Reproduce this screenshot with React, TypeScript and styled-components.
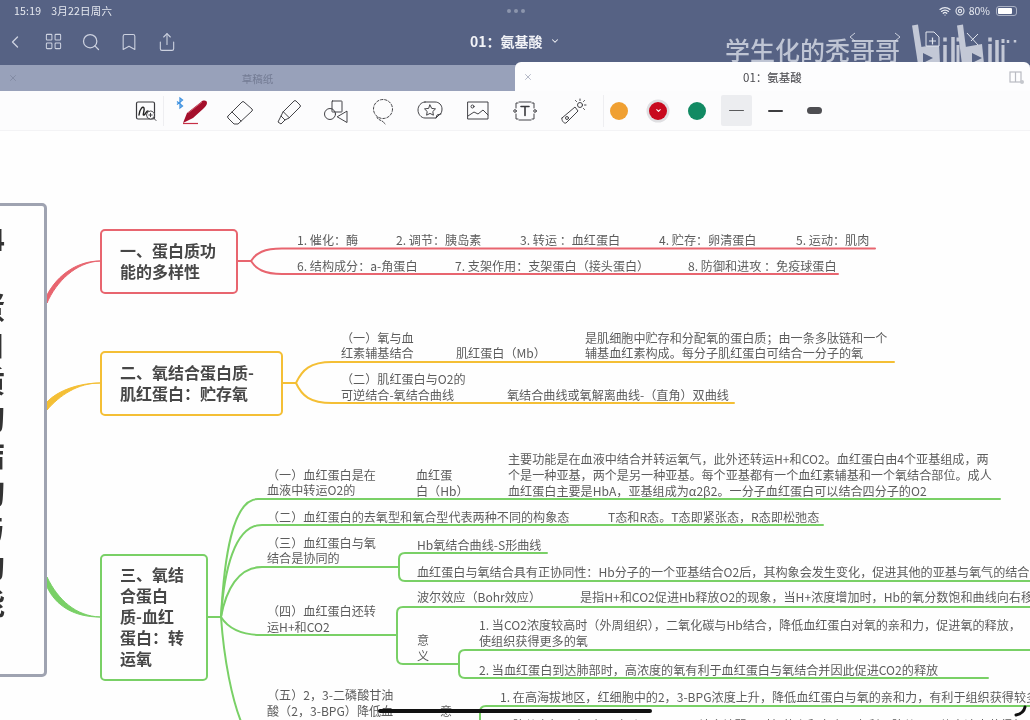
import React from "react";
import styled, { createGlobalStyle } from "styled-components";
import { ChevronLeft, ChevronDown, LayoutGrid, Search, Bookmark, Share, X, Wifi } from "lucide-react";

const Global = createGlobalStyle`
  html, body { margin: 0; padding: 0; width: 1030px; height: 720px; overflow: hidden; background: #fff; }
  * { box-sizing: border-box; }
  #root { width: 1030px; height: 720px; }
`;

const FONT = `"Noto Sans CJK SC", "Noto Sans", sans-serif`;

const Shell = styled.div`
  position: relative;
  width: 1030px;
  height: 720px;
  display: flex;
  flex-direction: column;
  overflow: hidden;
  font-family: ${FONT};
  background: #fefefe;
  filter: blur(0.35px);
`;

const TopBar = styled.header`
  position: relative;
  flex: 0 0 65px;
  background: #566284;
  color: #fff;
`;
const StatusRow = styled.div`
  height: 21px;
  padding: 0 13px 0 14px;
  display: flex;
  align-items: center;
  justify-content: space-between;
  font-size: 10.5px;
  color: #e6e9f0;
`;
const StatusTime = styled.span`
  display: flex;
  gap: 10px;
  letter-spacing: 0.2px;
  width: 140px;
`;
const Dots = styled.span`
  display: flex;
  gap: 3px;
`;
const Dot = styled.i`
  width: 4px;
  height: 4px;
  border-radius: 50%;
  background: #8c95ad;
`;
const StatusRight = styled.span`
  display: flex;
  align-items: center;
  gap: 4px;
  width: 140px;
  justify-content: flex-end;
`;
const Battery = styled.span`
  width: 21px;
  height: 10px;
  margin-left: 2px;
  border: 1px solid #aab1c4;
  border-radius: 3px;
  padding: 1px;
  display: flex;
`;
const BatteryFill = styled.span`
  width: 80%;
  background: #fff;
  border-radius: 1px;
`;
const NavRow = styled.div`
  height: 44px;
  position: relative;
  display: flex;
  align-items: center;
  padding-left: 5px;
  padding-bottom: 3px;
  color: #cdd2e0;
`;
const NavButton = styled.span`
  width: 38px;
  display: flex;
  justify-content: center;
  align-items: center;
  &:first-child { width: 20px; margin-right: 9px; }
`;
const Title = styled.div`
  position: absolute;
  left: 470px;
  top: 9px;
  display: flex;
  align-items: center;
  gap: 7px;
  font-size: 14px;
  font-weight: 700;
  line-height: 22px;
  color: #f2f3f7;
  white-space: nowrap;
`;
const Watermark = styled.div`
  position: absolute;
  left: 725px;
  top: 13px;
  font-size: 25px;
  font-weight: 500;
  line-height: 30px;
  color: #bfc5d4;
  white-space: nowrap;
`;
const LogoMark = styled.svg`
  position: absolute;
  left: 840px;
  top: 3px;
`;

const TabStrip = styled.div`
  flex: 0 0 26px;
  display: flex;
  background: #98a1ba;
`;
const BackTab = styled.div`
  flex: 0 0 515px;
  height: 26px;
  position: relative;
  display: flex;
  align-items: center;
  justify-content: center;
  font-size: 10.5px;
  color: #737b93;
`;
const CloseSlot = styled.span`
  position: absolute;
  left: 8px;
  top: 50%;
  transform: translateY(-50%);
  display: flex;
  color: #777f96;
`;
const FrontTab = styled.div`
  flex: 1;
  height: 29px;
  margin-top: -3px;
  position: relative;
  z-index: 2;
  background: #fdfdfe;
  border-radius: 6px 6px 0 0;
  display: flex;
  align-items: center;
  justify-content: center;
  font-size: 11.5px;
  color: #4a4a4f;
  padding-top: 1px;
`;
const SplitIcon = styled.svg`
  position: absolute;
  right: 5px;
  top: 8px;
`;

const Toolbar = styled.nav`
  flex: 0 0 40px;
  display: flex;
  align-items: center;
  padding-left: 130px;
  background: #fcfcfd;
  border-bottom: 1px solid #f3f3f5;
`;
const FirstTool = styled.span`
  width: 32px;
  display: flex;
  justify-content: center;
`;
const Rule = styled.span`
  width: 1px;
  height: 30px;
  background: #eeeef1;
  margin: 0 5px 0 1px;
`;
const Tool = styled.span`
  width: 47.5px;
  height: 32px;
  display: flex;
  align-items: center;
  justify-content: center;
`;
const Swatches = styled.div`
  display: flex;
  align-items: center;
  gap: 8px;
  margin-left: 6px;
  border-left: 1px solid #eeeef1;
  height: 32px;
`;
const Swatch = styled.span<{ $selected?: boolean }>`
  width: 31px;
  height: 31px;
  display: flex;
  align-items: center;
  justify-content: center;
  border-radius: 2px;
  background: ${(p) => (p.$selected ? "#ecedf0" : "transparent")};
`;
const ColorDot = styled.span<{ $color: string; $ring?: boolean }>`
  width: 18px;
  height: 18px;
  border-radius: 50%;
  background: ${(p) => p.$color};
  box-shadow: ${(p) => (p.$ring ? "0 0 0 2.5px #dfdfe2" : "none")};
  display: flex;
  align-items: center;
  justify-content: center;
  color: #fff;
`;
const Stroke = styled.span<{ $h: number; $w: number; $c: string }>`
  width: ${(p) => p.$w}px;
  height: ${(p) => p.$h}px;
  border-radius: ${(p) => p.$h}px;
  background: ${(p) => p.$c};
`;

const Canvas = styled.main`
  position: relative;
  flex: 1;
  overflow: hidden;
  background: #fefefe;
`;
const Wires = styled.svg`
  position: absolute;
  left: 0;
  top: 0;
`;
const RootNode = styled.div`
  position: absolute;
  left: -200px;
  top: 72px;
  width: 247px;
  height: 474px;
  background: #fefefe;
  border: 3px solid #9fa3b1;
  border-radius: 5px;
  padding: 14px 39px 0 0;
  display: flex;
  flex-direction: column;
  align-items: flex-end;
  color: #333;
`;
const RootChar = styled.span<{ $blank?: boolean }>`
  height: ${(p) => (p.$blank ? 30 : 37)}px;
  line-height: 37px;
  font-size: 30px;
  font-weight: 700;
`;
const Topic = styled.div<{ $x: number; $y: number; $w: number; $h: number; $c: string }>`
  position: absolute;
  left: ${(p) => p.$x}px;
  top: ${(p) => p.$y - 131}px;
  width: ${(p) => p.$w}px;
  height: ${(p) => p.$h}px;
  border: 2px solid ${(p) => p.$c};
  border-radius: 5px;
  background: #fefefe;
  padding: 0 0 2px 18px;
  display: flex;
  align-items: center;
  font-size: 16px;
  font-weight: 700;
  line-height: 21px;
  color: #474747;
  white-space: nowrap;
`;
const TopicText = styled.span`
  display: block;
`;
const Label = styled.span<{ $x: number; $y: number }>`
  position: absolute;
  left: ${(p) => p.$x}px;
  top: ${(p) => p.$y - 139}px;
  font-size: 12.1px;
  line-height: 16px;
  color: #5c5c5c;
  white-space: nowrap;
`;

const RED = "#e8656f";
const YEL = "#f4bf35";
const GRN = "#79d066";
const LOGO = "#c3c8d6";
const BAR = "#566284";

const labels: [number, number, string][] = [
  [297, 240, "1. 催化：酶"],
  [396, 240, "2. 调节：胰岛素"],
  [520, 240, "3. 转运 ：血红蛋白"],
  [659, 240, "4. 贮存：卵清蛋白"],
  [796, 240, "5. 运动：肌肉"],
  [297, 266, "6. 结构成分：a-角蛋白"],
  [455, 266, "7. 支架作用：支架蛋白（接头蛋白）"],
  [688, 266, "8. 防御和进攻 ：免疫球蛋白"],
  [341, 338, "（一）氧与血"],
  [341, 353, "红素辅基结合"],
  [456, 353, "肌红蛋白（Mb）"],
  [585, 338, "是肌细胞中贮存和分配氧的蛋白质；由一条多肽链和一个"],
  [585, 353, "辅基血红素构成。每分子肌红蛋白可结合一分子的氧"],
  [341, 379, "（二）肌红蛋白与O2的"],
  [341, 395, "可逆结合-氧结合曲线"],
  [507, 395, "氧结合曲线或氧解离曲线-（直角）双曲线"],
  [267, 475, "（一）血红蛋白是在"],
  [267, 490, "血液中转运O2的"],
  [416, 475, "血红蛋"],
  [416, 491, "白（Hb）"],
  [508, 459, "主要功能是在血液中结合并转运氧气，此外还转运H+和CO2。血红蛋白由4个亚基组成，两"],
  [508, 475, "个是一种亚基，两个是另一种亚基。每个亚基都有一个血红素辅基和一个氧结合部位。成人"],
  [508, 491, "血红蛋白主要是HbA，亚基组成为α2β2。一分子血红蛋白可以结合四分子的O2"],
  [267, 517, "（二）血红蛋白的去氧型和氧合型代表两种不同的构象态"],
  [608, 517, "T态和R态。T态即紧张态，R态即松弛态"],
  [267, 543, "（三）血红蛋白与氧"],
  [267, 558, "结合是协同的"],
  [417, 545, "Hb氧结合曲线-S形曲线"],
  [417, 572, "血红蛋白与氧结合具有正协同性：Hb分子的一个亚基结合O2后，其构象会发生变化，促进其他的亚基与氧气的结合"],
  [267, 611, "（四）血红蛋白还转"],
  [267, 627, "运H+和CO2"],
  [417, 597, "波尔效应（Bohr效应）"],
  [580, 597, "是指H+和CO2促进Hb释放O2的现象，当H+浓度增加时，Hb的氧分数饱和曲线向右移"],
  [417, 640, "意"],
  [417, 656, "义"],
  [479, 625, "1. 当CO2浓度较高时（外周组织），二氧化碳与Hb结合，降低血红蛋白对氧的亲和力，促进氧的释放，"],
  [479, 641, "使组织获得更多的氧"],
  [479, 670, "2. 当血红蛋白到达肺部时，高浓度的氧有利于血红蛋白与氧结合并因此促进CO2的释放"],
  [267, 695, "（五）2，3-二磷酸甘油"],
  [267, 711, "酸（2，3-BPG）降低血"],
  [440, 711, "意"],
  [500, 697, "1. 在高海拔地区，红细胞中的2，3-BPG浓度上升，降低血红蛋白与氧的亲和力，有利于组织获得较多"],
  [500, 725, "2. 胎儿血红蛋白（HbF）与2，3-BPG结合较弱，对氧的亲和力高，有利于胎儿从母体血液中获得氧"],
];

const rootChars = ["4", "", "蛋", "白", "质", "的", "结", "构", "与", "功", "能"];

const I = { fill: "none", stroke: "#3a3a3e", strokeWidth: 0.95, strokeLinecap: "round", strokeLinejoin: "round" } as const;

const Ico: React.FC<{ w?: number; h?: number; children: React.ReactNode }> = ({ w = 28, h = 28, children }) => (
  <svg width={w} height={h} viewBox={`0 0 ${w} ${h}`} {...I}>{children}</svg>
);

const Wire: React.FC<{ d: string; c: string }> = ({ d, c }) => <path d={d} fill="none" stroke={c} strokeWidth={2} strokeLinecap="round" />;

export default function App() {
  return (
    <>
      <Global />
      <Shell>
        <TopBar>
          <StatusRow>
            <StatusTime><span>15:19</span><span>3月22日周六</span></StatusTime>
            <Dots><Dot /><Dot /><Dot /></Dots>
            <StatusRight>
              <Wifi size={12} strokeWidth={2.5} />
              <svg width="10" height="10" viewBox="0 0 10 10" fill="none" stroke="#e6e9f0" strokeWidth="1.1"><circle cx="5" cy="5" r="4" /><circle cx="5" cy="5" r="1.6" /></svg>
              <span>80%</span>
              <Battery><BatteryFill /></Battery>
            </StatusRight>
          </StatusRow>
          <NavRow>
            <NavButton><ChevronLeft size={24} strokeWidth={1.6} /></NavButton>
            <NavButton><LayoutGrid size={19} strokeWidth={1.3} /></NavButton>
            <NavButton><Search size={20} strokeWidth={1.5} /></NavButton>
            <NavButton><Bookmark size={20} strokeWidth={1.3} /></NavButton>
            <NavButton><Share size={20} strokeWidth={1.3} /></NavButton>
            <Title>01：氨基酸<ChevronDown size={10} strokeWidth={2.5} /></Title>
            <Watermark>学生化的秃哥哥</Watermark>
            <LogoMark width="185" height="42" viewBox="840 24 185 42" fill="none">
              <g stroke="#dfe3ec" strokeWidth="1" opacity="0.85">
                <path d="M855 33l-5 4 5 4" />
                <path d="M895 33l5 4-5 4" />
              </g>
              <g stroke={LOGO} strokeLinecap="butt">
                <path d="M915 25L921 64" strokeWidth="6" />
                <path d="M921 47L939 44L940 64H921Z" fill={LOGO} stroke="none" />
                <path d="M923 53L933 58L923 63Z" fill={BAR} stroke="none" />
                <path d="M945 45V64M945 37.500V41.500" strokeWidth="3.500" />
                <path d="M953 37V64" strokeWidth="3.500" />
                <path d="M958 45V64M958 37.500V41.500" strokeWidth="3" />
                <path d="M960 25L965 64" strokeWidth="6" />
                <path d="M965 47L982 44L984 64H965Z" fill={LOGO} stroke="none" />
                <path d="M972 53L982 58L972 63Z" fill={BAR} stroke="none" />
                <path d="M990 44V64M990 37.500V41.500" strokeWidth="3.500" />
                <path d="M997 40V64" strokeWidth="3.500" />
                <path d="M1003 45V64M1003 39V43" strokeWidth="3" />
                <path d="M1008 40V43M1015 40V42.500" strokeWidth="2.500" />
              </g>
              <path d="M926 32H934L939 37V46H926Z" fill={BAR} stroke="#e2e5ee" strokeWidth="1" />
              <path d="M929 41H936M932.500 37.500V44.500" stroke="#e2e5ee" strokeWidth="1.200" />
              <path d="M967 33L978 45M978 34L971 41" stroke="#dfe3ec" strokeWidth="1" />
            </LogoMark>
          </NavRow>
        </TopBar>

        <TabStrip>
          <BackTab>
            <CloseSlot><X size={10} strokeWidth={1.5} /></CloseSlot>
            草稿纸
          </BackTab>
          <FrontTab>
            <CloseSlot><X size={10} strokeWidth={1.3} /></CloseSlot>
            01：氨基酸
            <SplitIcon width="16" height="16" viewBox="0 0 16 16" fill="none" stroke="#b9bbc2" strokeWidth="1.2">
              <rect x="1" y="2" width="11" height="10" />
              <path d="M6.500 2v10" />
              <circle cx="13" cy="12" r="2" fill="#c5c7cd" stroke="none" />
            </SplitIcon>
          </FrontTab>
        </TabStrip>

        <Toolbar>
          <FirstTool>
            <Ico w={24} h={24}>
              <rect x="2.500" y="3" width="18" height="17" rx="1.500" strokeWidth="1.200" />
              <path d="M5 16c1-7 4-9 5-7s-2 8 0 7 2-4 4-4" strokeWidth="1.400" stroke="#222" />
              <circle cx="16.500" cy="16" r="4" fill="#fcfcfd" />
              <path d="M14.800 16h3.400M16.500 14.300v3.400M19.500 19l2.500 2.500" />
            </Ico>
          </FirstTool>
          <Rule />
          <Tool>
            <svg width="34" height="30" viewBox="0 0 34 30" fill="none">
              <path d="M0 3.500L5.500 8 3 10V0l2.500 2L0 6.500" transform="translate(1 2)" stroke="#3f92e0" strokeWidth="1.300" />
              <path d="M7 27L11 17 L25 6C27 4 31 4 31 7C31 9 29 11 27 13L17 22Z" fill="#a40f2b" />
              <path d="M12 17L26 6" stroke="#d9707f" strokeWidth="0.800" />
              <path d="M7 27.500H22" stroke="#c72f45" strokeWidth="1.200" />
            </svg>
          </Tool>
          <Tool>
            <Ico>
              <path d="M2 19L16 5Q17 4 18 5L26 12Q27 13 26 14L12 27H8L2 21Q1 20 2 19Z" />
              <path d="M6 15L15 24" />
            </Ico>
          </Tool>
          <Tool>
            <Ico>
              <path d="M9 15L20 4Q21 3 22 4L26 8Q27 9 26 10L15 21" />
              <path d="M9 15L7 19L11 23L15 21Z" />
              <path d="M7 19L4 25L7 27L11 23" />
            </Ico>
          </Tool>
          <Tool>
            <Ico>
              <rect x="11" y="4" width="10" height="11" rx="0.500" />
              <circle cx="9" cy="17" r="5.500" />
              <path d="M26 14.500V25.500L16.500 20Z" />
            </Ico>
          </Tool>
          <Tool>
            <Ico>
              <circle cx="14" cy="12" r="9.500" strokeDasharray="2.400 1.800" />
              <path d="M8 20c0 2 3 3 5 4s2 2 3 3" strokeDasharray="2 1.500" />
            </Ico>
          </Tool>
          <Tool>
            <Ico>
              <path d="M9 5h10c4 0 7 3 7 7 0 3-1 5-3 6l-3 3H9c-4 0-7-4-7-8s3-8 7-8z" />
              <path d="M14 8l1.700 3.400 3.800.5-2.700 2.600.6 3.700-3.400-1.800-3.400 1.800.6-3.700-2.700-2.600 3.800-.5z" />
              <path d="M20 21l1-3 4-1" />
            </Ico>
          </Tool>
          <Tool>
            <Ico>
              <rect x="4" y="5" width="20" height="17" />
              <circle cx="8.500" cy="9.500" r="1.500" />
              <path d="M4 19l6-4 4 2 5-4 5 5" />
            </Ico>
          </Tool>
          <Tool>
            <Ico>
              <path d="M7 6H5v5M21 6h2v5M5 17v5h2M23 17v5h-2M8 5h12M8 23h12" />
              <circle cx="4" cy="14" r="1.300" />
              <circle cx="24" cy="14" r="1.300" />
              <path d="M10 9.500h8M14 9.500v9" strokeWidth="1.600" />
            </Ico>
          </Tool>
          <Tool>
            <Ico>
              <path d="M3 21L16 10l3 4L7 26c-2 1-5-3-4-5z" />
              <circle cx="8" cy="21" r="1.500" />
              <circle cx="21" cy="8" r="2.500" />
              <path d="M21 2v1.500M27 8h-1.500M25.500 3.500l-1 1M25.500 12.500l-1-1M16.500 3.500l1 1" />
            </Ico>
          </Tool>
          <Swatches>
            <Swatch><ColorDot $color="#f0a032" /></Swatch>
            <Swatch>
              <ColorDot $color="#c8091e" $ring>
                <ChevronDown size={7} strokeWidth={3.5} />
              </ColorDot>
            </Swatch>
            <Swatch><ColorDot $color="#128a63" /></Swatch>
            <Swatch $selected><Stroke $w={15} $h={1} $c="#5a5a5c" /></Swatch>
            <Swatch><Stroke $w={15} $h={2} $c="#3d3d40" /></Swatch>
            <Swatch><Stroke $w={15} $h={7} $c="#4e4e52" /></Swatch>
          </Swatches>
        </Toolbar>

        <Canvas>
          <Wires width="1030" height="589" viewBox="0 131 1030 589">
            <path d="M47 303C56 282 76 262 100 261C78 261 58 274 47 295Z" fill={RED} stroke={RED} strokeWidth="1" />
            <path d="M47 410C60 395 78 383 100 383C80 383 58 390 47 402Z" fill={YEL} stroke={YEL} strokeWidth="1" />
            <path d="M47 577C58 600 76 616 100 617C74 617 56 606 47 587Z" fill={GRN} stroke={GRN} strokeWidth="1" />

            <Wire c={RED} d="M238 261H251" />
            <Wire c={RED} d="M251 261C256 253 264 248.500 282 248.500H875" />
            <Wire c={RED} d="M251 261C256 269 264 274 282 274H838" />

            <Wire c={YEL} d="M283 383H296" />
            <Wire c={YEL} d="M296 383C302 370 310 362 332 362H894" />
            <Wire c={YEL} d="M296 383C302 396 310 403 332 403H734" />

            <Wire c={GRN} d="M208 617H221" />
            <Wire c={GRN} d="M221 617C224 560 232 499 258 499H1000" />
            <Wire c={GRN} d="M221 617C224 572 234 525 262 525H823" />
            <Wire c={GRN} d="M221 617C226 590 238 567 262 567H399" />
            <Wire c={GRN} d="M547 553H405Q399 553 399 559V575Q399 581 405 581H1030" />
            <Wire c={GRN} d="M221 617C228 628 240 635 262 635H397" />
            <Wire c={GRN} d="M221 617C224 660 232 700 242 724" />
            <Wire c={GRN} d="M1030 607H403Q397 607 397 613V658Q397 664 403 664H459" />
            <Wire c={GRN} d="M1030 650H465Q459 650 459 656V672Q459 678 465 678H988" />
            <Wire c={GRN} d="M1030 706H486Q480 706 480 712V724" />
          </Wires>

          <RootNode>
            {rootChars.map((c, i) => (
              <RootChar key={i} $blank={c === ""}>{c}</RootChar>
            ))}
          </RootNode>

          <Topic $x={100} $y={229} $w={138} $h={65} $c={RED}><TopicText>一、蛋白质功<br />能的多样性</TopicText></Topic>
          <Topic $x={100} $y={351} $w={183} $h={65} $c={YEL}><TopicText>二、氧结合蛋白质-<br />肌红蛋白：贮存氧</TopicText></Topic>
          <Topic $x={100} $y={554} $w={108} $h={127} $c={GRN}><TopicText>三、氧结<br />合蛋白<br />质-血红<br />蛋白：转<br />运氧</TopicText></Topic>

          {labels.map(([x, y, t]) => (
            <Label key={`${x}-${y}`} $x={x} $y={y}>{t}</Label>
          ))}

          <Wires width="1030" height="589" viewBox="0 131 1030 589">
            <path d="M380 711H650" stroke="#111" strokeWidth="4" strokeLinecap="round" fill="none" />
            <path d="M1025 707C1024 712 1021 714 1016 715" stroke="#111" strokeWidth="3" strokeLinecap="round" fill="none" />
          </Wires>
        </Canvas>
      </Shell>
    </>
  );
}
